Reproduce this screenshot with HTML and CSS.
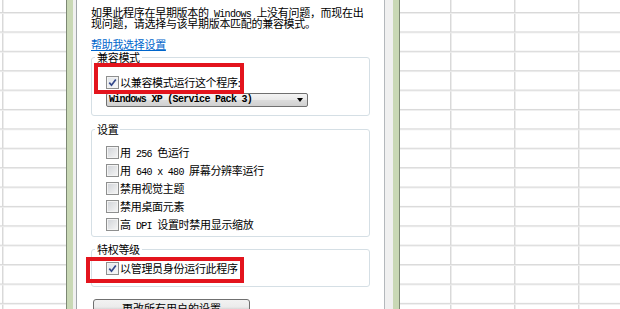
FILE: index.html
```html
<!DOCTYPE html>
<html lang="zh-CN">
<head>
    <meta charset="UTF-8">
    <title>兼容性</title>
    <link rel="stylesheet" href="styles.css">
</head>
<body>
    <div class="dialog">
        <div class="dialog-body">
            <div class="tab-page">
                <p class="intro">如果此程序在早期版本的<span class="en"> Windows </span>上没有问题，而现在出<br>现问题，请选择与该早期版本匹配的兼容模式。</p>
                <div class="help-row"><a class="help" href="#">帮助我选择设置</a></div>

                <fieldset class="group group-compat">
                    <legend>兼容模式</legend>
                    <label class="check-row">
                        <span class="cb checked"><svg viewBox="0 0 11 11" width="11" height="11"><path d="M2.3 5.6 L4.5 8.2 L8.8 2.4" fill="none" stroke="#34488a" stroke-width="1.7"/></svg></span>
                        <span class="label">以兼容模式运行这个程序:</span>
                    </label>
                    <div class="combo"><span class="en">Windows XP (Service Pack 3)</span><span class="arrow"></span></div>
                </fieldset>

                <fieldset class="group group-settings">
                    <legend>设置</legend>
                    <label class="check-row"><span class="cb"></span><span class="label">用<span class="en"> 256 </span>色运行</span></label>
                    <label class="check-row"><span class="cb"></span><span class="label">用<span class="en"> 640 x 480 </span>屏幕分辨率运行</span></label>
                    <label class="check-row"><span class="cb"></span><span class="label">禁用视觉主题</span></label>
                    <label class="check-row"><span class="cb"></span><span class="label">禁用桌面元素</span></label>
                    <label class="check-row"><span class="cb"></span><span class="label">高<span class="en"> DPI </span>设置时禁用显示缩放</span></label>
                </fieldset>

                <fieldset class="group group-level">
                    <legend>特权等级</legend>
                    <label class="check-row">
                        <span class="cb checked"><svg viewBox="0 0 11 11" width="11" height="11"><path d="M2.3 5.6 L4.5 8.2 L8.8 2.4" fill="none" stroke="#34488a" stroke-width="1.7"/></svg></span>
                        <span class="label">以管理员身份运行此程序</span>
                    </label>
                </fieldset>

                <button class="btn">更改所有用户的设置</button>

                <div class="mark mark-compat"></div>
                <div class="mark mark-admin"></div>
            </div>
        </div>
    </div>
</body>
</html>
```

FILE: styles.css
```css
body {
    margin: 0;
    width: 620px;
    height: 309px;
    overflow: hidden;
    font-family: "Noto Sans CJK SC", sans-serif;
    font-size: 11px;
    letter-spacing: -0.3px;
    color: #000;
    background-color: #fff;
    background-image:
        linear-gradient(to bottom, #d9d9d9 0, #d9d9d9 1px, #ededed 1px, #ededed 2px, transparent 2px),
        linear-gradient(to right, #d9d9d9 0, #d9d9d9 1px, #ededed 1px, #ededed 2px, transparent 2px);
    background-size: 100% 19.4px, 64px 100%;
    background-position: 0 12px, 2px 0;
}

.dialog {
    margin-left: 66px;
    width: 334px;
    height: 309px;
    box-sizing: border-box;
    padding: 0 6px;
    border-left: 1px solid #7c8873;
    border-right: 1px solid #7c8873;
    background: #c9d8b5;
}

.dialog-body {
    height: 100%;
    padding: 0 8px 0 3px;
    background: #f0f0f0;
}

.tab-page {
    position: relative;
    height: 100%;
    box-sizing: border-box;
    padding: 7px 14px 0;
    background: #fff;
    border-left: 1px solid #a0a5aa;
    border-right: 1px solid #b4b8bc;
}

.intro {
    margin: 0;
    line-height: 11px;
}

/* half-width latin, like the old bitmap font */
.en {
    font-family: "Liberation Mono", monospace;
    font-size: 10px;
    letter-spacing: -0.7px;
    line-height: 1px;
}

.help-row {
    margin-top: 10px;
    line-height: 11px;
}

.help {
    color: #0066cc;
    text-decoration: underline;
}

.group {
    margin: 0;
    padding: 0;
    min-width: 0;
    border: 1px solid #d5dfe5;
    border-radius: 3px;
}

.group legend {
    margin-left: 3px;
    padding: 0 2px;
    line-height: 12px;
}

.group-compat {
    margin-top: 1px;
    padding: 10px 0 8px;
}

.group-settings {
    margin-top: 7px;
    padding: 8px 0 3px;
}

.group-level {
    margin-top: 6px;
    padding: 4px 0 9px;
}

.check-row {
    display: flex;
    align-items: center;
    height: 18px;
    padding-left: 14px;
    line-height: 11px;
}

.label {
    white-space: pre;
}

.cb {
    position: relative;
    flex: none;
    width: 13px;
    height: 13px;
    box-sizing: border-box;
    margin-right: 1px;
    border: 1px solid #8e8f8f;
    background: linear-gradient(135deg, #cfd2d7, #f6f6f6);
    box-shadow: inset 0 0 0 1px #f3f3f3;
}

.cb.checked {
    background: linear-gradient(135deg, #dfe4ea, #fafafa);
}

.cb svg {
    display: block;
}

.combo {
    display: flex;
    align-items: center;
    justify-content: space-between;
    margin: 2px 0 0 14px;
    width: 202px;
    height: 14px;
    box-sizing: border-box;
    padding: 0 4px 0 2px;
    border: 1px solid #707070;
    border-radius: 2px;
    background: linear-gradient(#f4f4f4, #e9e9e9 50%, #dcdcdc 50%, #d0d0d0);
    line-height: 12px;
}

.combo .en {
    font-weight: bold;
    line-height: 12px;
}

.arrow {
    width: 0;
    height: 0;
    border-top: 4px solid #000;
    border-left: 3.5px solid transparent;
    border-right: 3.5px solid transparent;
}

.btn {
    display: block;
    margin: 12px 0 0 2px;
    width: 157px;
    height: 18px;
    padding: 0;
    border: 1px solid #707070;
    border-radius: 3px;
    background: linear-gradient(#f2f2f2, #ebebeb 45%, #dddddd 50%, #cfcfcf);
    font: inherit;
    line-height: 11px;
    color: #000;
}

.mark {
    position: absolute;
    box-sizing: border-box;
    border: 4px solid #e3141d;
}

.mark-compat {
    left: 17px;
    top: 63px;
    width: 150px;
    height: 31px;
}

.mark-admin {
    left: 9px;
    top: 257px;
    width: 158px;
    height: 26px;
}
```
